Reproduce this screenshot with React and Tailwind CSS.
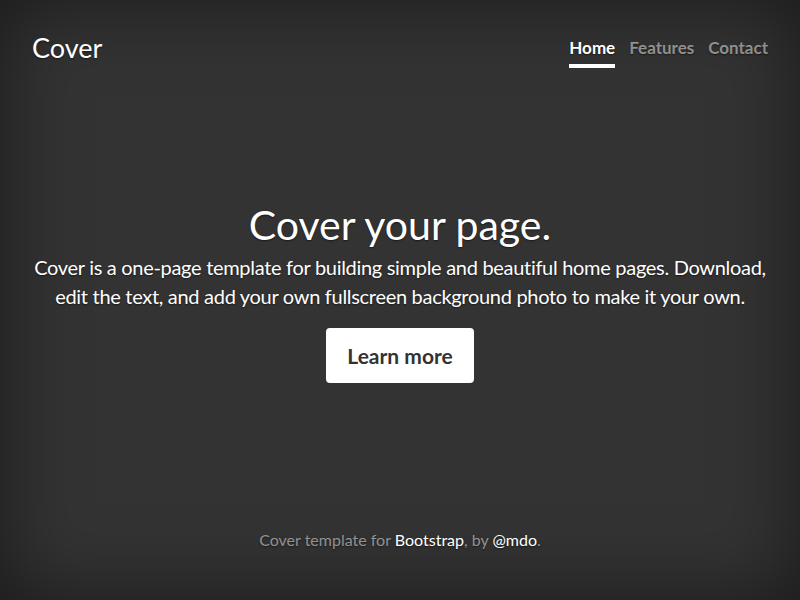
export default function App() {
  return (
    <div className="w-[800px] h-[600px] bg-[#333333] text-white flex flex-col shadow-[inset_0_0_5rem_rgba(0,0,0,0.5)] [text-shadow:0_0.05rem_0.1rem_rgba(0,0,0,0.5)] font-['Lato',sans-serif]">
      <header className="flex items-center justify-between px-8 pt-[29px]">
        <h3 className="text-[27px] leading-[30px] font-normal">Cover</h3>
        <nav className="flex gap-[14px] text-[17px] font-bold mt-[6px]">
          <a className="text-white border-b-4 border-white pb-[3px]">Home</a>
          <a className="text-white/50 border-b-4 border-transparent pb-[3px]">Features</a>
          <a className="text-white/50 border-b-4 border-transparent pb-[3px]">Contact</a>
        </nav>
      </header>
      <main className="flex-1 flex flex-col items-center justify-center text-center px-8 pb-[11px]">
        <h1 className="text-[41px] leading-[48px] font-normal">Cover your page.</h1>
        <p className="text-[20px] leading-[29px] mt-[4px] tracking-[-0.3px]">
          Cover is a one-page template for building simple and beautiful home pages. Download, edit the text, and add your own fullscreen background photo to make it your own.
        </p>
        <button className="mt-[17px] w-[148px] h-[55px] bg-white text-[#333] text-[21px] font-bold rounded-[4px] [text-shadow:none]">
          Learn more
        </button>
      </main>
      <footer className="text-center text-white/50 text-[16px] pb-[48px]">
        Cover template for <a className="text-white">Bootstrap</a>, by <a className="text-white">@mdo</a>.
      </footer>
    </div>
  );
}
